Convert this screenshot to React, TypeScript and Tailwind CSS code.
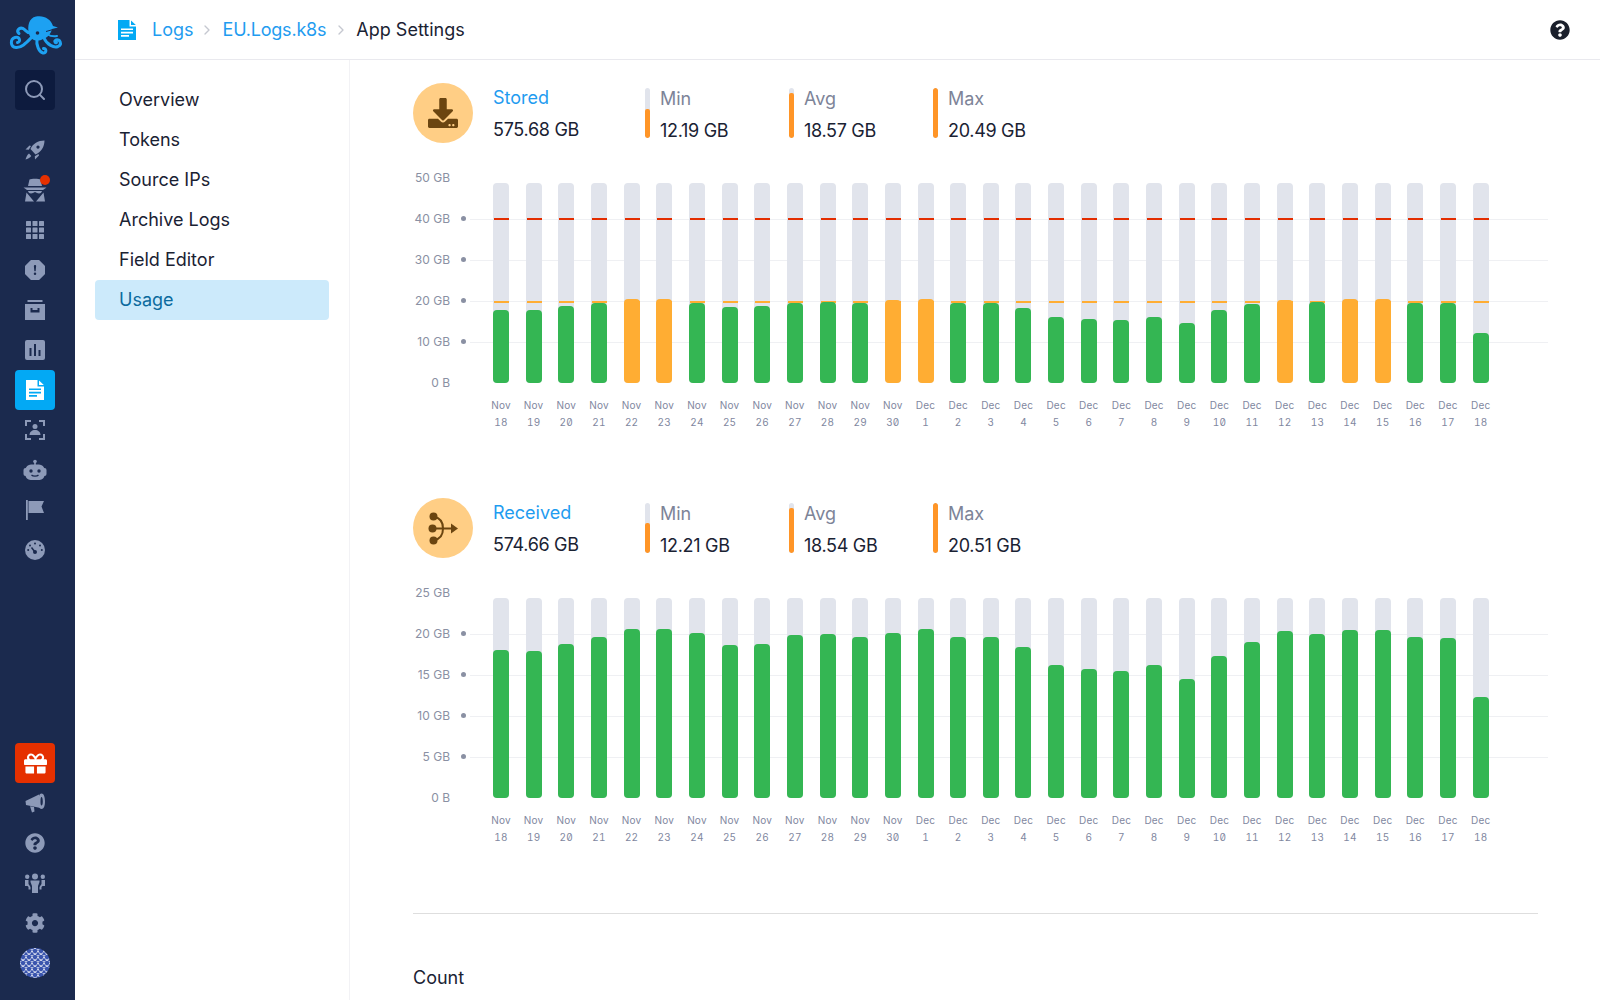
import { ChevronRight, Search } from 'lucide-react';
import type { ReactNode } from 'react';
import { BsExclamationOctagonFill } from 'react-icons/bs';
import { FaCog, FaDownload, FaGift, FaQuestionCircle } from 'react-icons/fa';

const RAIL_BG = '#1b2a4e';

const DATES = [
  ...Array.from({ length: 13 }, (_, i) => ['Nov', String(18 + i)]),
  ...Array.from({ length: 18 }, (_, i) => ['Dec', String(1 + i)]),
];

const STORED_HEIGHTS = [
  73, 73, 77, 80, 84, 84, 80, 76, 77, 80, 81, 80, 83, 84, 80, 80, 75, 66, 64, 63, 66, 60, 73, 79,
  83, 81, 84, 84, 80, 80, 50,
];

const RECEIVED_HEIGHTS = [
  148, 147, 154, 161, 169, 169, 165, 153, 154, 163, 164, 161, 165, 169, 161, 161, 151, 133, 129,
  127, 133, 119, 142, 156, 167, 164, 168, 168, 161, 160, 101,
];

const NAV_ITEMS = ['Overview', 'Tokens', 'Source IPs', 'Archive Logs', 'Field Editor'];

function FileIcon({ className }: { className?: string }) {
  return (
    <svg viewBox="0 0 18 20" className={className} fill="currentColor" aria-hidden="true">
      <path
        fillRule="evenodd"
        d="M0 0h11.5v6.5H18V20H0zM3 8.5v1.6h12V8.5zM3 11.8v1.6h12v-1.6zM3 15.1v1.6h8v-1.6z"
      />
      <path d="M13 0.4 17.8 5H13z" />
    </svg>
  );
}

function OctopusLogo() {
  return (
    <svg viewBox="0 0 75 60" className="h-[60px] w-[75px]" aria-hidden="true">
      <g fill="none" stroke="#1da1f2" strokeWidth="3" strokeLinecap="round">
        <path d="M33 35C27 41 22 47 16 46.500C10 46 10 38 15 36.500C20 35.500 21 41 17.500 41.500" />
        <path d="M32 31C28 34 26 29 23 27.500C19 26 16 30 19 32.500" />
        <path d="M37 38C36 44 39 51 43 52C47 52.500 46.500 47 43.500 47.500" />
        <path d="M44 37C47 44 54 47 58 45.500C62.500 43.500 60 37.500 56 39C54 40 55 42 56.500 41.500" />
        <path d="M47 33C50 35 53 36 57 35" strokeWidth="2" />
      </g>
      <path
        fill="#1da1f2"
        d="M29 33C27 25 29 17 36 15.500C44 14 51 18 53 25L58 26.500L52 28C51 33 47 37 43 38C38 41 31 40 29 33Z"
      />
      <circle cx="37.500" cy="32" r="1.800" fill={RAIL_BG} />
      <path d="M46 30.500 53 28.500" stroke={RAIL_BG} strokeWidth="1" />
    </svg>
  );
}

function Glyph({ children }: { children: ReactNode }) {
  return (
    <svg viewBox="0 0 20 20" className="h-5 w-5 overflow-visible" fill="currentColor" aria-hidden="true">
      {children}
    </svg>
  );
}

function RocketIcon() {
  return (
    <Glyph>
      <path
        fillRule="evenodd"
        d="M19.500 0.500C13 0.500 8 3.500 5.500 9L10.500 14.500C16 12 19.500 7 19.500 0.500ZM13 5.500a1.600 1.600 0 1 0 .01 0Z"
      />
      <path d="M4.500 5.500 0.500 9.500 3.800 9.800 6 6ZM14 15.500 10 19.500 9.800 16.300 13.500 14ZM4 13.500C2 15 1 18 0.500 19.500C2.500 19 5 18 6.300 16Z" />
    </Glyph>
  );
}

function SecretIcon() {
  return (
    <svg viewBox="0 0 24 24" className="h-6 w-6 overflow-visible" fill="currentColor" aria-hidden="true">
      <path d="M6.500 1.500C8 0.500 16 0.500 17.500 1.500L19 8H5Z" />
      <path d="M0.500 9.500H23.500L20 12H4Z" />
      <path d="M5 13H19C18.500 15.500 16 16 14 15L12 14L10 15C8 16 5.500 15.500 5 13Z" />
      <path d="M3.500 14.500 11 23.500H2ZM20.500 14.500 13 23.500H22Z" />
    </svg>
  );
}

function GridIcon() {
  return (
    <Glyph>
      {[1, 7.5, 14].map((y) =>
        [1, 7.5, 14].map((x) => <rect key={`${x}-${y}`} x={x} y={y} width="5" height="5" rx="0.5" />),
      )}
    </Glyph>
  );
}

function ArchiveIcon() {
  return (
    <Glyph>
      <rect x="2.500" y="0" width="15" height="2" />
      <path
        fillRule="evenodd"
        d="M0 4H20V20H0ZM5.500 8V12.500H14.500V8H12.500V10H7.500V8Z"
      />
    </Glyph>
  );
}

function PollIcon() {
  return (
    <Glyph>
      <path
        fillRule="evenodd"
        d="M2 0H18a2 2 0 0 1 2 2V18a2 2 0 0 1-2 2H2a2 2 0 0 1-2-2V2a2 2 0 0 1 2-2ZM4.500 8V16H6.500V8ZM9 4V16H11V4ZM13.500 10V16H15.500V10Z"
      />
    </Glyph>
  );
}

function ScanUserIcon() {
  return (
    <Glyph>
      <path d="M0 0h6v2H2v4H0zM14 0h6v6h-2V2h-4zM0 14h2v4h4v2H0zM18 14h2v6h-6v-2h4z" />
      <circle cx="10" cy="6.500" r="2.500" />
      <path d="M4.500 15c0-3 2.500-5 5.500-5s5.500 2 5.500 5z" />
    </Glyph>
  );
}

function RobotIcon() {
  return (
    <svg viewBox="0 0 24 20" className="h-5 w-6 overflow-visible" fill="currentColor" aria-hidden="true">
      <circle cx="12" cy="1.500" r="1.800" />
      <rect x="11.200" y="2" width="1.600" height="3" />
      <rect x="0.500" y="8" width="4" height="8" rx="2" />
      <rect x="19.500" y="8" width="4" height="8" rx="2" />
      <path d="M8 4.500H16A5.500 5.500 0 0 1 21.500 10V15A5 5 0 0 1 16.500 20H7.500A5 5 0 0 1 2.500 15V10A5.500 5.500 0 0 1 8 4.500Z" />
      <circle cx="8" cy="11" r="1.700" fill={RAIL_BG} />
      <circle cx="16" cy="11" r="1.700" fill={RAIL_BG} />
      <path d="M8.500 15C10 16.500 14 16.500 15.500 15" fill="none" stroke={RAIL_BG} strokeWidth="1.300" />
    </svg>
  );
}

function FlagIcon() {
  return (
    <Glyph>
      <path d="M1 0h1.800v20H1zM3.500 1H19l-2.500 5.500L19 13H3.500z" />
    </Glyph>
  );
}

function GaugeIcon() {
  return (
    <Glyph>
      <circle cx="10" cy="10" r="10" />
      <g fill={RAIL_BG}>
        <circle cx="10" cy="3.500" r="1" />
        <circle cx="5" cy="5.500" r="1" />
        <circle cx="15" cy="5.500" r="1" />
        <circle cx="3.200" cy="10" r="1" />
        <circle cx="16.800" cy="10" r="1" />
        <circle cx="10" cy="12" r="2" />
      </g>
      <path d="M10 12 6.500 7.500" stroke={RAIL_BG} strokeWidth="1.500" />
    </Glyph>
  );
}

function HornIcon() {
  return (
    <Glyph>
      <path d="M0.500 8 14 1.500 15.500 15 1 12Z" />
      <path
        fillRule="evenodd"
        d="M16.500 0.500C18.800 0.500 20 4 20 8.500S18.800 16 16.500 16S13.500 13 13.500 8.500S14.200 0.500 16.500 0.500ZM16.500 4C15.800 4 15.500 6 15.500 8.500S15.800 12.500 16.500 12.500S17.800 11 17.800 8.500S17.200 4 16.500 4Z"
      />
      <path d="M5 13.200 9 14 9.500 18.500 7 19.500Z" />
    </Glyph>
  );
}

function TeamIcon() {
  return (
    <Glyph>
      <circle cx="10" cy="3.500" r="3" />
      <circle cx="2.200" cy="3.800" r="2.200" />
      <circle cx="17.800" cy="3.800" r="2.200" />
      <path d="M5.500 7.500H14.500V9L13 13V20H7V13L5.500 9Z" />
      <path d="M0 7H3.500V11L5.500 14V16.500H3.500V14L2.500 13H0ZM20 7H16.500V11L14.500 14V16.500H16.500V14L17.500 13H20Z" />
    </Glyph>
  );
}

function Avatar() {
  const rings = [];
  for (let x = 3; x < 30; x += 6) {
    for (let y = 3; y < 30; y += 6) {
      rings.push(
        <rect
          key={`${x}-${y}`}
          x={x - 2.5}
          y={y - 2.5}
          width="5"
          height="5"
          rx="2"
          fill="none"
          stroke="#fff"
          strokeWidth="1"
          strokeDasharray="1.500 0.600"
        />,
      );
    }
  }
  return (
    <svg viewBox="0 0 30 30" className="h-[30px] w-[30px]" aria-hidden="true">
      <clipPath id="avatar-clip">
        <circle cx="15" cy="15" r="15" />
      </clipPath>
      <g clipPath="url(#avatar-clip)">
        <rect width="30" height="30" fill="#3a55ae" />
        {rings}
      </g>
    </svg>
  );
}

function BranchArrowIcon() {
  return (
    <svg viewBox="0 0 30 33" className="h-[33px] w-[30px]" aria-hidden="true">
      <g fill="#6b4510">
        <circle cx="5.500" cy="4.500" r="4" />
        <circle cx="4.500" cy="16.500" r="4" />
        <circle cx="5.500" cy="28.500" r="4" />
        <path d="M23 11.500 30 16.500 23 21.500z" />
      </g>
      <g fill="none" stroke="#6b4510" strokeWidth="2">
        <path d="M4 16.500H25" />
        <path d="M6 5C13 6 15 10 15 16.500C15 23 13 27 6 28" />
      </g>
    </svg>
  );
}

function RailIcon({ children, active, alert }: { children: ReactNode; active?: boolean; alert?: boolean }) {
  return (
    <div
      className={`flex h-10 w-10 items-center justify-center rounded-[4px] ${
        active ? 'bg-[#03a9f4] text-white' : alert ? 'bg-[#e53000] text-white' : 'text-[#8d9ab8]'
      }`}
    >
      {children}
    </div>
  );
}

function Rail() {
  return (
    <aside className="flex h-full w-[75px] shrink-0 flex-col justify-between bg-[#1b2a4e] pb-[17px] pl-[15px]">
      <div className="flex flex-col">
        <div className="-ml-[15px] mt-[1px] h-[60px]">
          <OctopusLogo />
        </div>
        <div className="mb-5 mt-[9px] flex h-10 w-10 items-center justify-center rounded-[4px] bg-[#0d1b3e] text-[#8d9ab8]">
          <Search size={24} strokeWidth={2} />
        </div>
        <RailIcon>
          <RocketIcon />
        </RailIcon>
        <div className="relative w-10">
          <RailIcon>
            <SecretIcon />
          </RailIcon>
          <span className="absolute right-[5px] top-[5px] h-[10px] w-[10px] rounded-full bg-[#e53000]" />
        </div>
        <RailIcon>
          <GridIcon />
        </RailIcon>
        <RailIcon>
          <BsExclamationOctagonFill size={20} />
        </RailIcon>
        <RailIcon>
          <ArchiveIcon />
        </RailIcon>
        <RailIcon>
          <PollIcon />
        </RailIcon>
        <RailIcon active>
          <FileIcon className="h-5 w-[18px]" />
        </RailIcon>
        <RailIcon>
          <ScanUserIcon />
        </RailIcon>
        <RailIcon>
          <RobotIcon />
        </RailIcon>
        <RailIcon>
          <FlagIcon />
        </RailIcon>
        <RailIcon>
          <GaugeIcon />
        </RailIcon>
      </div>
      <div className="flex flex-col">
        <RailIcon alert>
          <FaGift size={23} />
        </RailIcon>
        <RailIcon>
          <HornIcon />
        </RailIcon>
        <RailIcon>
          <FaQuestionCircle size={20} />
        </RailIcon>
        <RailIcon>
          <TeamIcon />
        </RailIcon>
        <RailIcon>
          <FaCog size={20} />
        </RailIcon>
        <div className="flex h-10 w-10 items-center justify-center">
          <Avatar />
        </div>
      </div>
    </aside>
  );
}

function Header() {
  return (
    <header className="flex h-[60px] shrink-0 items-center border-b border-[#e9e9ee] pl-[43px] pr-[30px] text-[18px]">
      <FileIcon className="h-5 w-[18px] text-[#03a9f4]" />
      <span className="ml-4 text-[#1f9cf0]">Logs</span>
      <ChevronRight size={16} className="mx-[5px] text-[#c5c8d0]" />
      <span className="ml-[3px] tracking-[-0.2px] text-[#1f9cf0]">EU.Logs.k8s</span>
      <ChevronRight size={16} className="mx-[7px] text-[#c5c8d0]" />
      <span className="text-[#1a2233]">App Settings</span>
      <FaQuestionCircle size={20} className="ml-auto text-[#1a1f2b]" />
    </header>
  );
}

function SideMenu() {
  return (
    <nav className="w-[275px] shrink-0 border-r border-[#f2f2f5] px-5 pt-5 text-[18px] text-[#1a2233]">
      {NAV_ITEMS.map((item) => (
        <div key={item} className="flex h-10 items-center pb-[2px] pl-6">
          {item}
        </div>
      ))}
      <div className="flex h-10 items-center rounded-[4px] bg-[#cceafb] pb-[2px] pl-6 text-[#0b6a9e]">Usage</div>
    </nav>
  );
}

function Stat({ label, value, fill }: { label: string; value: string; fill: number }) {
  return (
    <div className="flex w-[144px]">
      <div className="relative mt-[5px] h-[50px] w-[5px] overflow-hidden rounded-[3px] bg-[#e1e4ec]">
        <div className="absolute bottom-0 w-full rounded-[2px] bg-[#ff9527]" style={{ height: fill }} />
      </div>
      <div className="ml-[10px]">
        <div className="mt-[2px] h-[27px] leading-[27px] text-[#7d8498]">{label}</div>
        <div className="mt-[5px] leading-[27px] tracking-[-0.3px] text-[#1a2233]">{value}</div>
      </div>
    </div>
  );
}

function Bar({ height, limits }: { height: number; limits: boolean }) {
  const over = limits && height >= 82;
  return (
    <div className="relative h-[200px] w-4 rounded-[4px] bg-[#e1e4ec]">
      {limits && (
        <>
          <div className="absolute bottom-[163px] left-[1px] right-0 h-[2px] bg-[#e32d00]" />
          <div className="absolute bottom-[80px] left-[1px] right-0 h-[2px] bg-[#ffad33]" />
        </>
      )}
      <div
        className={`absolute bottom-0 w-full rounded-[4px] ${over ? 'bg-[#ffad33]' : 'bg-[#34b653]'}`}
        style={{ height }}
      />
    </div>
  );
}

function Chart({ ticks, heights, limits }: { ticks: string[]; heights: number[]; limits: boolean }) {
  return (
    <div className="relative mt-[13.5px]">
      {ticks.map((tick, i) => {
        const marked = i > 0 && i < ticks.length - 1;
        return (
          <div key={tick} className="flex h-[41px] items-center">
            <span className="w-[37px] whitespace-nowrap pt-[2px] text-right text-[12px] text-[#8a90a3]">{tick}</span>
            {marked && (
              <>
                <span className="ml-[11px] h-[5px] w-[5px] rounded-full bg-[#8a90a3]" />
                <span className="ml-[4px] mt-[2px] h-px flex-1 bg-[#eff0f3]" />
              </>
            )}
          </div>
        );
      })}
      <div className="absolute left-[71.67px] top-[26.5px] flex">
        {heights.map((height, i) => (
          <div key={i} className="flex w-[32.67px] flex-col items-center">
            <Bar height={height} limits={limits} />
            <div className="mt-[13.5px] text-center text-[10px] leading-[17px] tracking-[0.2px] text-[#7f87a0] tabular-nums slashed-zero">
              <div>{DATES[i][0]}</div>
              <div>{DATES[i][1]}</div>
            </div>
          </div>
        ))}
      </div>
    </div>
  );
}

function UsageBlock({
  icon,
  title,
  total,
  stats,
  children,
}: {
  icon: ReactNode;
  title: string;
  total: string;
  stats: { label: string; value: string; fill: number }[];
  children: ReactNode;
}) {
  return (
    <section>
      <div className="flex h-[60px] items-start text-[18px]">
        <div className="flex h-[60px] w-[60px] items-center justify-center rounded-full bg-[#ffce85]">{icon}</div>
        <div className="ml-5 w-[152px]">
          <div className="mt-[1px] h-[27px] leading-[27px] text-[#1f9cf0]">{title}</div>
          <div className="mt-[5px] leading-[27px] tracking-[-0.3px] text-[#1a2233]">{total}</div>
        </div>
        {stats.map((stat) => (
          <Stat key={stat.label} {...stat} />
        ))}
      </div>
      {children}
    </section>
  );
}

export default function App() {
  return (
    <div className="flex h-[1000px] w-[1600px] overflow-hidden bg-white font-['Inter',sans-serif]">
      <Rail />
      <div className="flex min-w-0 flex-1 flex-col">
        <Header />
        <div className="flex min-h-0 flex-1">
          <SideMenu />
          <main className="min-w-0 flex-1 pl-[63px] pr-[52px] pt-[23px]">
            <UsageBlock
              icon={<FaDownload size={30} className="text-[#6b4510]" />}
              title="Stored"
              total="575.68 GB"
              stats={[
                { label: 'Min', value: '12.19 GB', fill: 29 },
                { label: 'Avg', value: '18.57 GB', fill: 45 },
                { label: 'Max', value: '20.49 GB', fill: 50 },
              ]}
            >
              <Chart
                ticks={['50 GB', '40 GB', '30 GB', '20 GB', '10 GB', '0 B']}
                heights={STORED_HEIGHTS}
                limits
              />
            </UsageBlock>
            <div className="h-[95.5px]" />
            <UsageBlock
              icon={<BranchArrowIcon />}
              title="Received"
              total="574.66 GB"
              stats={[
                { label: 'Min', value: '12.21 GB', fill: 30 },
                { label: 'Avg', value: '18.54 GB', fill: 45 },
                { label: 'Max', value: '20.51 GB', fill: 50 },
              ]}
            >
              <Chart
                ticks={['25 GB', '20 GB', '15 GB', '10 GB', '5 GB', '0 B']}
                heights={RECEIVED_HEIGHTS}
                limits={false}
              />
            </UsageBlock>
            <div className="mr-[10px] mt-[95px] h-px bg-[#dedede]" />
            <h2 className="mt-[50px] text-[18px] leading-[27px] text-[#1a2233]">Count</h2>
          </main>
        </div>
      </div>
    </div>
  );
}
